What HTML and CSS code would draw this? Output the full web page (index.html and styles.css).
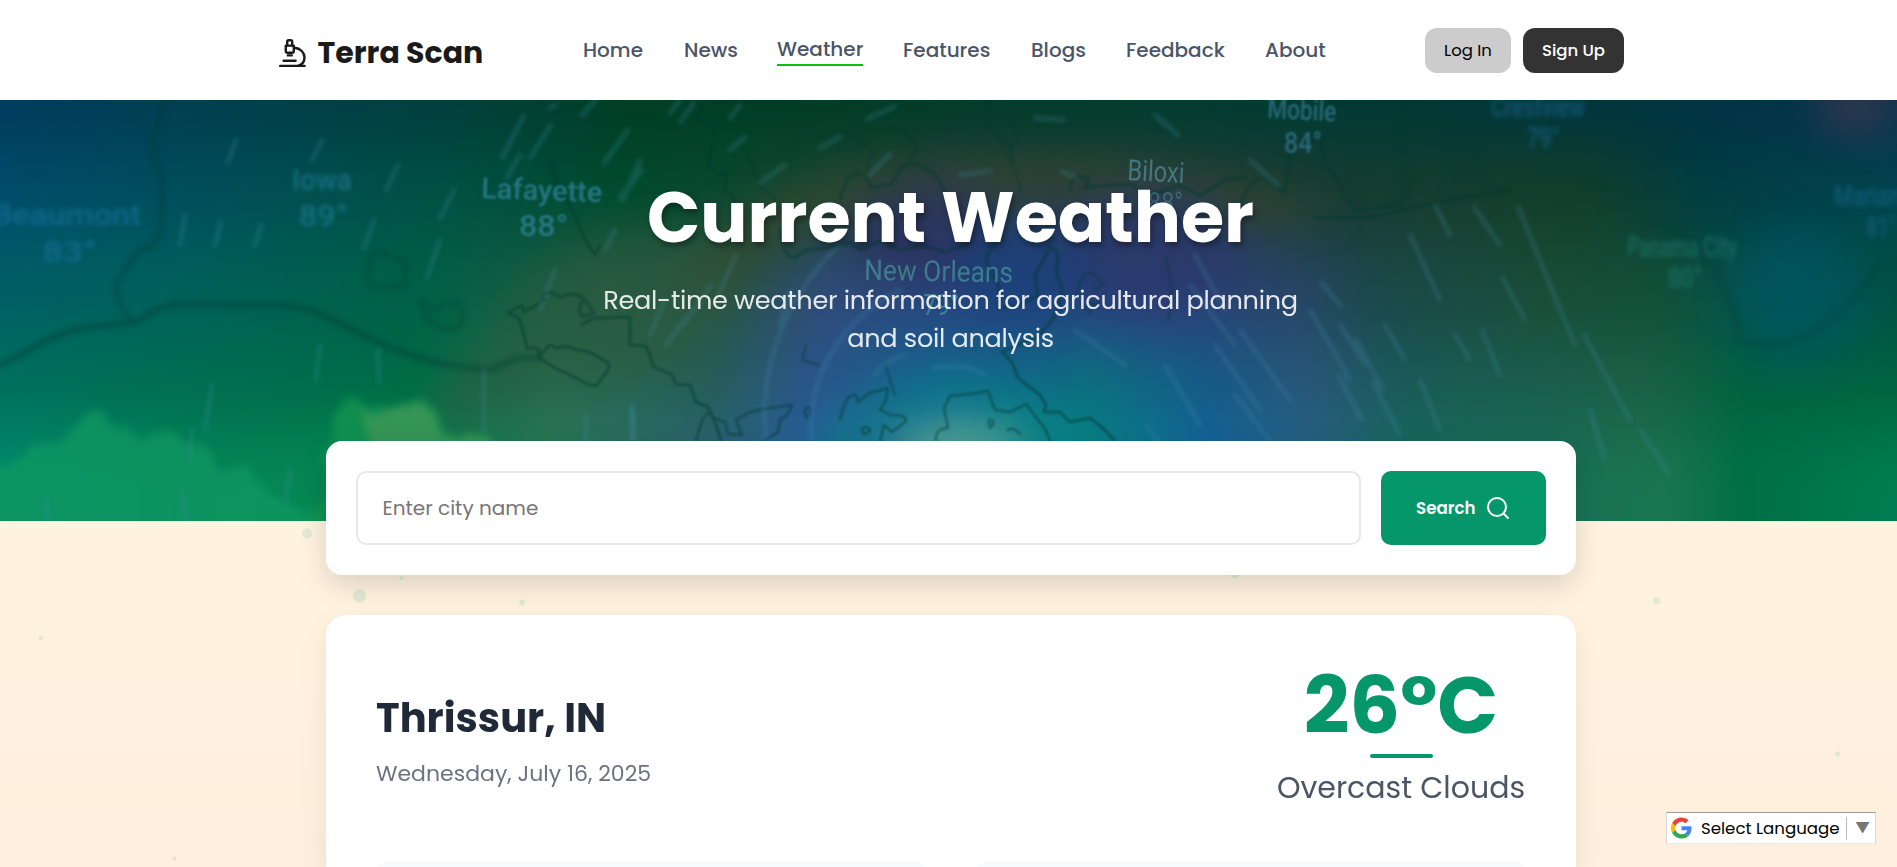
FILE: index.html
```html
<!DOCTYPE html>
<html lang="en">
<head>
<meta charset="utf-8">
<title>Terra Scan</title>
<link rel="stylesheet" href="styles.css">
</head>
<body>
<header class="navbar">
  <a class="brand">
    <svg class="brand-icon" viewBox="0 0 27 29" fill="none" stroke="#1a1a1a" stroke-width="2.4" stroke-linecap="round" stroke-linejoin="round">
      <path d="M8.2 6.500V2.800q0-1.500 1.500-1.500h2q1.500 0 1.500 1.500v3.700"/>
      <path d="M6.800 6.600h8v5.500q0 1.700-1.700 1.700H8.500q-1.700 0-1.700-1.700z"/>
      <path d="M8.800 16.400h4M4.600 21.700h12M1.200 26.900h24.400"/>
      <path d="M15.500 8.800c6 .5 10 4.800 10 9.700c0 4-2.500 7.200-6.500 8.300"/>
    </svg>
    <span class="brand-name">Terra Scan</span>
  </a>
  <nav class="links">
    <a class="w-home">Home</a><a class="w-news">News</a><a class="w-weather active">Weather</a><a class="w-features">Features</a><a class="w-blogs">Blogs</a><a class="w-feedback">Feedback</a><a class="w-about">About</a>
  </nav>
  <div class="auth"><button class="login">Log In</button><button class="signup">Sign Up</button></div>
</header>

<section class="hero">
  <svg class="hero-map" viewBox="0 100 1897 421" preserveAspectRatio="none" aria-hidden="true">
    <defs>
      <linearGradient id="r1"><stop offset="0" stop-color="#003a60"/><stop offset=".12" stop-color="#003f50"/><stop offset=".25" stop-color="#003f3c"/><stop offset=".34" stop-color="#003d24"/><stop offset=".5" stop-color="#003b27"/><stop offset=".6" stop-color="#003c2d"/><stop offset=".75" stop-color="#003836"/><stop offset=".88" stop-color="#003344"/><stop offset="1" stop-color="#0e3351"/></linearGradient>
      <linearGradient id="r2"><stop offset="0" stop-color="#004c70"/><stop offset=".12" stop-color="#004e5c"/><stop offset=".25" stop-color="#005143"/><stop offset=".34" stop-color="#004b2d"/><stop offset=".42" stop-color="#124830"/><stop offset=".5" stop-color="#30403f"/><stop offset=".6" stop-color="#2b3e3a"/><stop offset=".7" stop-color="#183c30"/><stop offset=".82" stop-color="#123e28"/><stop offset=".88" stop-color="#003d42"/><stop offset="1" stop-color="#004650"/></linearGradient>
      <linearGradient id="r3"><stop offset="0" stop-color="#005e69"/><stop offset=".12" stop-color="#00605a"/><stop offset=".24" stop-color="#006045"/><stop offset=".33" stop-color="#275b44"/><stop offset=".39" stop-color="#285448"/><stop offset=".44" stop-color="#304a78"/><stop offset=".53" stop-color="#254283"/><stop offset=".61" stop-color="#2e407c"/><stop offset=".67" stop-color="#284468"/><stop offset=".71" stop-color="#1c474c"/><stop offset=".8" stop-color="#194d36"/><stop offset=".86" stop-color="#104f38"/><stop offset=".92" stop-color="#00535a"/><stop offset="1" stop-color="#005039"/></linearGradient>
      <linearGradient id="r4"><stop offset="0" stop-color="#00705f"/><stop offset=".12" stop-color="#006e50"/><stop offset=".23" stop-color="#006b45"/><stop offset=".3" stop-color="#267053"/><stop offset=".38" stop-color="#255e59"/><stop offset=".43" stop-color="#29558a"/><stop offset=".49" stop-color="#146490"/><stop offset=".57" stop-color="#0a7080"/><stop offset=".63" stop-color="#145b86"/><stop offset=".68" stop-color="#285779"/><stop offset=".73" stop-color="#185b57"/><stop offset=".85" stop-color="#1b6045"/><stop offset=".9" stop-color="#006240"/><stop offset="1" stop-color="#006540"/></linearGradient>
      <linearGradient id="r5"><stop offset="0" stop-color="#008c70"/><stop offset=".12" stop-color="#04855a"/><stop offset=".22" stop-color="#068a50"/><stop offset=".3" stop-color="#2c7855"/><stop offset=".38" stop-color="#2c6477"/><stop offset=".43" stop-color="#2663a0"/><stop offset=".5" stop-color="#2f8f98"/><stop offset=".57" stop-color="#078985"/><stop offset=".63" stop-color="#1467a0"/><stop offset=".68" stop-color="#236386"/><stop offset=".73" stop-color="#196c60"/><stop offset=".86" stop-color="#19754f"/><stop offset=".9" stop-color="#007044"/><stop offset="1" stop-color="#008257"/></linearGradient>
      <filter id="vblur" color-interpolation-filters="sRGB" filterUnits="userSpaceOnUse" x="-50" y="0" width="2000" height="620"><feGaussianBlur stdDeviation="0 34"/></filter>
      <filter id="b2" color-interpolation-filters="sRGB" filterUnits="userSpaceOnUse" x="-50" y="50" width="2000" height="520"><feGaussianBlur stdDeviation="2.500"/></filter>
      <filter id="b1" color-interpolation-filters="sRGB" filterUnits="userSpaceOnUse" x="-50" y="50" width="2000" height="520"><feGaussianBlur stdDeviation="1"/></filter>
      <filter id="bs" color-interpolation-filters="sRGB" filterUnits="userSpaceOnUse" x="-50" y="50" width="2000" height="520"><feGaussianBlur stdDeviation="2"/></filter>
      <filter id="cloud" color-interpolation-filters="sRGB" filterUnits="userSpaceOnUse" x="-50" y="50" width="2000" height="600"><feTurbulence type="fractalNoise" baseFrequency=".05" numOctaves="3" seed="4" result="n"/><feDisplacementMap in="SourceGraphic" in2="n" scale="28" xChannelSelector="R" yChannelSelector="G"/><feGaussianBlur stdDeviation="4"/></filter>
      <filter id="b16" color-interpolation-filters="sRGB" filterUnits="userSpaceOnUse" x="-50" y="0" width="2050" height="620"><feGaussianBlur stdDeviation="18"/></filter>
    </defs>
    <g filter="url(#vblur)">
      <rect x="-50" y="-100" width="1997" height="250" fill="url(#r1)"/>
      <rect x="-50" y="150" width="1997" height="90" fill="url(#r2)"/>
      <rect x="-50" y="240" width="1997" height="100" fill="url(#r3)"/>
      <rect x="-50" y="340" width="1997" height="90" fill="url(#r4)"/>
      <rect x="-50" y="430" width="1997" height="350" fill="url(#r5)"/>
    </g>
    <g filter="url(#b16)">
      <path d="M660 290Q760 150 940 170Q1120 150 1260 190L1340 215L1250 225Q1110 170 940 195Q800 220 720 300Z" fill="#3a472c" opacity=".6"/>
      <path d="M520 290Q580 230 680 230L740 260L690 370L540 400L450 430L420 420Z" fill="#2b5a3c" opacity=".5"/>
      <ellipse cx="925" cy="235" rx="75" ry="50" fill="#2b3062" opacity=".7"/>
      <ellipse cx="1150" cy="250" rx="95" ry="60" fill="#2a376c" opacity=".7"/>
      <ellipse cx="1020" cy="270" rx="70" ry="50" fill="#18417a" opacity=".65"/>
      <ellipse cx="960" cy="450" rx="65" ry="28" fill="#58a692" opacity=".8"/>
      <path d="M780 520Q800 400 950 370Q1080 390 1120 520L1080 520Q1040 420 950 405Q850 430 840 520Z" fill="#008583" opacity=".45"/>
      <ellipse cx="1855" cy="105" rx="38" ry="30" fill="#3d3751" opacity=".7"/>
      <ellipse cx="1800" cy="300" rx="65" ry="70" fill="#005562" opacity=".5"/>
    </g>
    <g filter="url(#cloud)">
      <path d="M-20 485L20 455L60 440L75 422L108 412L125 435L138 440L170 432L195 445L215 462L250 470L272 495L320 515V550H-20Z" fill="#109862" opacity=".75"/>
      <path d="M318 465L336 415L356 400L388 406L430 400L452 440L478 434L510 446V550H310L326 480Z" fill="#149650" opacity=".75"/>
      <path d="M366 412L425 404L450 440L490 436L510 460L375 460Z" fill="#4a9a5a" opacity=".65"/>
    </g>
    <g fill="none" stroke="#003a32" stroke-linecap="round" stroke-linejoin="round">
      <g filter="url(#b2)">
        <path d="M0 365C42 344 55 332 90 327S130 327 150 313S205 306 260 305S320 314 370 338S450 366 490 370C512 361 510 357 538 358" stroke-width="7" opacity=".36"/>
        <path d="M165 100Q158 125 152 150Q165 173 163 195T160 235Q151 250 145 248T116 285Q117 305 129 317" stroke-width="7" opacity=".28"/>
        <path d="M370 258Q378 247 390 256L405 262V286L385 288L368 284Z M420 300Q430 313 442 307L458 300Q470 325 450 330Q423 325 420 300" stroke-width="5" opacity=".28"/>
        <path d="M1403 115Q1400 140 1405 175L1403 190L1385 205M1449 140L1456 185L1440 192M1474 140L1476 178L1500 192M1540 170L1575 172L1605 190M1650 225Q1670 215 1700 250T1740 340Q1790 355 1830 320T1880 265" stroke-width="8" opacity=".22"/>
      </g>
      <g filter="url(#b1)" stroke-width="2" opacity=".48">
        <path stroke-width="3" d="M538 357L545 350Q550 342 556 348Q565 345 575 349L592 353L608 363Q610 370 604 375L597 385Q590 387 580 380L555 368Z M538 357Q543 345 527 348Q523 330 519 318L508 313L522 305L524 312L545 300Q538 295 550 292L560 297Q575 290 585 300L594 313L583 317Q576 310 582 302M582 324L594 318L630 317V345L646 346L654 367L672 375L676 384L690 385L696 402L708 407L716 425L721 441"/>
        <path stroke-width="3" d="M693 100L700 110L697 120L712 124L716 140L710 155L708 166L718 172L728 175L724 188L735 200M550 160L560 190L575 215L585 240L595 255L600 245"/>
        <path d="M984 100L988 125L1000 140L1010 145L1012 165L1018 180L1022 192M1012 125L1018 140L1006 155L1014 162M860 120L854 135L872 150L866 175M905 130L918 150L905 168M745 150L760 185L775 200"/>
        <path stroke-width="3" d="M1240 205Q1255 165 1275 185L1285 192L1291 150M1323 140V160L1340 185L1355 210L1380 208L1400 205L1415 178M1070 190Q1070 177 1080 176L1090 180L1084 188L1100 186L1130 184L1150 195L1180 185L1200 196L1225 180L1245 178M1315 218L1370 217L1450 200L1510 190"/>
        <path stroke-width="3" d="M780 230Q782 256 795 258Q805 247 822 249L850 243L862 250L880 240L900 250L925 246L945 252L968 244M840 200Q846 172 860 174Q872 180 870 188L892 184Q902 160 917 165Q935 170 940 183L950 200M1000 240Q980 255 990 272Q1000 280 1000 300L998 308L1020 305L1038 295L1035 275L1050 248Q1062 250 1056 270L1062 290L1058 310Q1050 325 1036 337L1002 352L1012 362L1018 378L1040 395L1046 405L1044 412L1060 412L1070 422L1090 418L1105 430L1115 441"/>
        <path stroke-width="2.500" d="M696 441L702 420Q710 408 714 418L725 422L728 434L742 435L736 420L750 412L770 408L792 405Q790 415 780 420L778 432L764 441M840 420Q846 392 856 395L858 402L870 393L888 388L886 400L880 410L890 415Q910 415 905 422L892 432L884 425L880 441M936 441Q935 428 948 428L944 408L950 396L970 394L988 391L995 410L1010 412L1026 404L1046 430L1050 441M805 415Q804 408 809 407Q813 412 806 418M862 432Q862 425 868 428T863 434M989 425Q988 418 992 420T990 428M1008 430Q1012 426 1020 434"/>
        <path d="M1165 258Q1176 285 1168 320M1077 295Q1082 270 1093 273Q1100 282 1104 284L1094 290M1084 310Q1092 302 1098 304L1088 313M806 345L802 360L820 365M885 365L895 395"/>
      </g>
    </g>
    <g fill="none" stroke="#3f8ca0" stroke-width="5" stroke-linecap="round" filter="url(#bs)" opacity=".27">
      <path d="M236 140L228 162M322 140L312 160M398 165L386 190M524 115L502 158M551 125L530 158M520 155L507 177M556 105L549 108M596 100L582 115M628 130L604 163M642 170L620 198M454 190L440 218M374 220L364 248M261 225L255 245M221 222L215 245M185 215L180 245M440 240L427 278M615 230L605 250M640 160L623 200M680 100L670 113M694 103L680 122M740 105L730 118M745 137L730 150M785 165L760 183M840 137L820 148M895 106L867 119M1035 118L1064 120M1155 115L1178 135M890 154L870 175M960 175L990 171M1062 172L1075 177M1250 160L1278 185"/>
      <path d="M320 345L316 380M378 350L379 382M212 385L205 430M192 430L190 460M290 470L286 500M484 370L484 430M586 415L586 440M632 405L634 440M47 500L48 521M182 492L187 521"/>
    </g>
    <g fill="none" stroke="#4b90ae" stroke-width="4.500" stroke-linecap="round" filter="url(#bs)" opacity=".25">
      <path d="M736 255L718 295M711 285L683 325M684 320L666 345M665 300L650 335M555 270L540 310M767 441C755 370 790 290 840 245M812 441C805 380 840 320 900 290M790 290L780 325M905 355Q885 360 875 375M933 368Q965 362 985 375M1075 330L1125 365M632 410V440"/>
      <path d="M1321 282L1340 305M1310 310L1350 380M1340 325L1366 365M1356 340L1382 388M1338 375L1362 420M1385 325L1405 360M1410 235L1440 300M1435 205L1450 235M1474 207L1500 245M1518 207L1575 345M1502 277L1525 320M1373 382L1400 435M1420 380L1440 430M1455 335L1470 360M1482 330L1500 375M1584 335L1630 420M1590 410L1605 460M1640 430L1670 475M1195 255L1225 310M1190 285L1235 345M1215 345L1260 410M1240 330L1290 400M1165 365L1200 425M1235 395L1270 441M1145 425L1158 441"/>
    </g>
    <g class="map-labels" fill="#31859b" opacity=".75">
      <g filter="url(#bs)" fill="#207a92"><text x="292" y="190" textLength="60" lengthAdjust="spacingAndGlyphs">Iowa</text><text x="299" y="226" textLength="49" lengthAdjust="spacingAndGlyphs">89°</text></g>
      <g filter="url(#b2)" fill="#17729a"><text x="-8" y="225" textLength="149" lengthAdjust="spacingAndGlyphs">Beaumont</text><text x="43" y="262" textLength="53" lengthAdjust="spacingAndGlyphs">83°</text></g>
      <g filter="url(#b1)"><text x="481" y="198" textLength="121" lengthAdjust="spacingAndGlyphs" transform="rotate(2 481 198)">Lafayette</text><text x="519" y="236" textLength="49" lengthAdjust="spacingAndGlyphs">88°</text></g>
      <g class="sharp" fill="#4e9e9e" opacity=".85"><text x="864" y="280" textLength="149" lengthAdjust="spacingAndGlyphs" transform="rotate(1 864 280)">New Orleans</text><text x="923" y="315" textLength="36" lengthAdjust="spacingAndGlyphs">79°</text></g>
      <g class="sharp" fill="#4d8b98"><text x="1127" y="180" textLength="57" lengthAdjust="spacingAndGlyphs" transform="rotate(3 1127 180)">Biloxi</text><text x="1148" y="213" textLength="35" lengthAdjust="spacingAndGlyphs" opacity=".7">88°</text></g>
      <g fill="#347890" filter="url(#b1)"><text x="1267" y="118" textLength="69" lengthAdjust="spacingAndGlyphs" transform="rotate(3 1267 118)">Mobile</text><text x="1284" y="153" textLength="38" lengthAdjust="spacingAndGlyphs">84°</text></g>
      <g fill="#1a6288" filter="url(#b2)"><text x="1491" y="117" textLength="94" lengthAdjust="spacingAndGlyphs">Crestview</text><text x="1527" y="148" textLength="33" lengthAdjust="spacingAndGlyphs">79°</text><text x="1627" y="257" textLength="110" lengthAdjust="spacingAndGlyphs" fill="#1f766c">Panama City</text><text x="1668" y="288" textLength="34" lengthAdjust="spacingAndGlyphs" fill="#1f766c">80°</text><text x="1834" y="206" textLength="90" lengthAdjust="spacingAndGlyphs">Marianna</text><text x="1866" y="237" textLength="30" lengthAdjust="spacingAndGlyphs">81°</text></g>
    </g>
  </svg>
  <div class="hero-copy">
    <h1><span>Current Weather</span></h1>
    <p><span class="sub-one">Real-time weather information for agricultural planning</span><br><span class="sub-two">and soil analysis</span></p>
  </div>
</section>

<main class="page">
  <svg class="dots" viewBox="0 521 1897 346" fill="#059669" opacity=".1" aria-hidden="true">
    <circle cx="307" cy="533.500" r="5"/><circle cx="359.500" cy="596" r="6.700"/><circle cx="401.500" cy="578" r="2"/><circle cx="522" cy="602.500" r="3"/><circle cx="41" cy="638" r="2.500"/><circle cx="174.500" cy="858.500" r="2"/><circle cx="1235" cy="574" r="4"/><circle cx="1656.500" cy="600.500" r="3.700"/><circle cx="1837.500" cy="754" r="2.700"/>
  </svg>
  <form class="search-card">
    <input class="city" type="text" placeholder="Enter city name">
    <button class="search-btn" type="button"><span>Search</span>
      <svg viewBox="0 0 24 24" fill="none" stroke="#fff" stroke-width="2" stroke-linecap="round"><circle cx="11" cy="11" r="9"/><path d="M17.500 17.500L22 22"/></svg>
    </button>
  </form>
  <section class="weather-card">
    <div class="summary">
      <div class="place"><h2><span>Thrissur, IN</span></h2><p><span>Wednesday, July 16, 2025</span></p></div>
      <div class="reading"><div class="temp"><span>26°C</span></div><i class="rule"></i><div class="sky"><span>Overcast Clouds</span></div></div>
    </div>
    <div class="tiles"><div class="tile"></div><div class="tile"></div></div>
  </section>
</main>

<div class="translate">
  <svg class="g-logo" viewBox="0 0 48 48"><path fill="#ea4335" d="M24 9.500c3.540 0 6.710 1.220 9.210 3.600l6.850-6.850C35.900 2.380 30.470 0 24 0 14.620 0 6.510 5.380 2.560 13.220l7.980 6.190C12.430 13.720 17.740 9.500 24 9.500z"/><path fill="#4285f4" d="M46.980 24.550c0-1.570-.15-3.090-.38-4.550H24v9.020h12.940c-.58 2.960-2.260 5.480-4.780 7.180l7.730 6c4.510-4.180 7.090-10.360 7.090-17.650z"/><path fill="#fbbc05" d="M10.530 28.590a14.500 14.500 0 0 1 0-9.180l-7.980-6.190a24 24 0 0 0 0 21.560z"/><path fill="#34a853" d="M24 48c6.480 0 11.930-2.130 15.890-5.810l-7.730-6c-2.150 1.450-4.920 2.300-8.160 2.300-6.260 0-11.570-4.220-13.470-9.910l-7.980 6.190C6.510 42.620 14.620 48 24 48z"/></svg>
  <span class="lang">Select Language</span><span class="caret">▼</span>
</div>
</body>
</html>
```
FILE: styles.css
```css
* { box-sizing: border-box; }
html, body { margin: 0; height: 100%; }
body {
  height: 867px;
  overflow: hidden;
  font-family: Poppins, Inter, "Liberation Sans", sans-serif;
  background: #fff3e0;
  display: flex;
  flex-direction: column;
}
h1, h2, p { margin: 0; }
span { white-space: nowrap; }
button { font-family: inherit; border: 0; padding: 0; }

.navbar { flex: none; height: 100px; background: #fff; display: flex; padding-left: 279px; }
.brand { width: 304px; display: flex; gap: 11.500px; padding-top: 38.500px; }
.brand-icon { width: 27px; height: 29px; }
.brand-name { font-size: 30px; font-weight: 700; line-height: 30px; color: #1a1a1a; margin-top: -1px; }
.links { display: flex; gap: 40px; width: 842px; padding-top: 35px; font-size: 20px; line-height: 31px; font-weight: 500; color: #4a5568; }
.links a { height: 31px; white-space: nowrap; }
.links .active { border-bottom: 2px solid #0fbf0f; line-height: 29px; }
.w-home { width: 61px; } .w-news { width: 53px; } .w-weather { width: 86px; }
.w-features { width: 88px; } .w-blogs { width: 55px; } .w-feedback { width: 99px; } .w-about { width: 61px; }
.auth { display: flex; gap: 12px; padding-top: 28px; }
.auth button { height: 45px; border-radius: 12px; font-size: 16.500px; }
.login { width: 86px; background: #ccc; color: #000; }
.auth .signup { width: 101px; background: #333; color: #fff; font-weight: 500; }

.hero { flex: none; height: 421px; position: relative; background: #00503c; }
.hero-map { position: absolute; inset: 0; width: 100%; height: 100%; }
.map-labels { font-family: Roboto, sans-serif; font-size: 29px; font-weight: 500; }
.map-labels .sharp { font-weight: 400; }
.hero-copy { position: relative; padding: 75px 0 0 4px; text-align: center; color: #fff; }
h1 { font-size: 70px; line-height: 86px; font-weight: 700; text-shadow: 2px 4px 6px rgba(0, 0, 0, .35); }
.hero-copy p { margin-top: 19.500px; font-size: 25.600px; line-height: 38.400px; letter-spacing: -.3px; color: rgba(255, 255, 255, .88); }

.page { position: relative; height: 346px; background: linear-gradient(#fff4e0, #ffefde); }
.dots { position: absolute; inset: 0; width: 1897px; height: 346px; }
.search-card, .weather-card { position: relative; width: 1250px; margin: 0 0 0 326px; background: #fff; }
.search-card { margin-top: -80px; height: 134px; border-radius: 16px; padding: 30px; display: flex; gap: 20px; box-shadow: 0 10px 30px rgba(0, 0, 0, .15); }
.city { width: 1005px; height: 74px; border: 2px solid #e5e7eb; border-radius: 10px; padding: 0 24.500px; font: 400 20px Poppins, Inter, sans-serif; }
.city::placeholder { color: #757575; opacity: 1; }
.search-btn { width: 165px; border-radius: 10px; background: #059669; color: #fff; font-size: 16.700px; font-weight: 600; display: flex; align-items: center; padding-left: 35px; gap: 10px; }
.search-btn svg { width: 24px; height: 24px; }
.search-btn span { width: 60px; text-align: left; }
.weather-card { margin-top: 40px; height: 252px; overflow: hidden; border-radius: 20px 20px 0 0; padding: 50px; box-shadow: 0 10px 30px rgba(0, 0, 0, .08); }
.summary { display: flex; justify-content: space-between; height: 196px; }
.place { padding-top: 27.500px; }
h2 { font-size: 40px; line-height: 50px; color: #1f2937; }
.place p { margin-top: 17.500px; font-size: 22px; line-height: 28px; color: #6b7280; }
.reading { width: 250px; display: flex; flex-direction: column; align-items: center; text-align: center; }
.temp { font-size: 80px; line-height: 80px; font-weight: 700; color: #059669; }
.rule { width: 63px; height: 4px; border-radius: 2px; background: #059669; margin-top: 9px; }
.sky { margin-top: 12px; font-size: 30px; line-height: 36px; color: #4b5563; }
.tiles { display: grid; grid-template-columns: 1fr 1fr; gap: 50px; }
.tile { height: 20px; border-radius: 12px 12px 0 0; background: #f9fafb; }

.translate { position: fixed; left: 1666px; top: 812px; width: 210px; height: 32px; border: 1px solid #d5d5d5; border-top-color: #9b9b9b; border-bottom-color: #e8e8e8; background: #fff; display: flex; align-items: center; padding-left: 4px; color: #000; }
.g-logo { width: 21px; height: 22px; margin-right: 9px; flex: none; }
.lang { font-size: 16.600px; width: 145px; }
.caret { border-left: 1px solid #bbb; height: 23px; line-height: 22px; padding-left: 8px; font-size: 15px; color: #767676; }
```
